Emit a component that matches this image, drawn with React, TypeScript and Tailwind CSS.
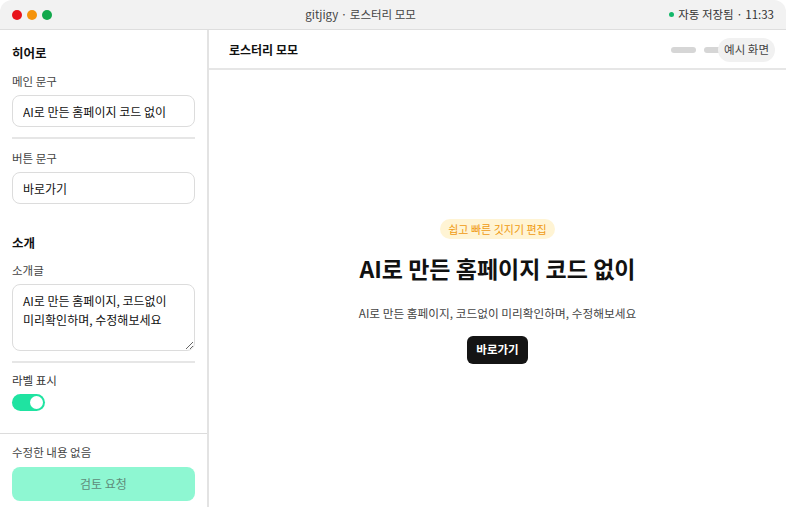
import {useState} from 'react';

const font = {fontFamily: '"Noto Sans CJK KR", "Noto Sans", sans-serif'};

function Field({label, value}: {label: string; value: string}) {
  return (
    <div className="flex flex-col">
      <div className="mb-[6px] text-[11.5px] leading-[16px] text-[#444]">{label}</div>
      <input
        readOnly
        value={value}
        className="h-[32px] w-full rounded-[8px] border border-[#dcdcdc] bg-white px-[10px] text-[12px] text-[#111] outline-none"
      />
    </div>
  );
}

function Toggle() {
  const [on, setOn] = useState(true);
  return (
    <button
      onClick={() => setOn(!on)}
      className={`flex h-[17px] w-[33px] items-center rounded-full px-[2px] ${on ? 'justify-end bg-[#1fe3a1]' : 'justify-start bg-[#d4d4d4]'}`}
    >
      <span className="block h-[13px] w-[13px] rounded-full bg-white" />
    </button>
  );
}

export default function App() {
  return (
    <div className="flex h-[507px] w-[786px] flex-col overflow-hidden rounded-t-[12px] bg-white" style={font}>
      {/* title bar */}
      <div className="relative flex h-[30px] shrink-0 items-center border-b border-[#dedede] bg-[#f2f2f2] px-[12px]">
        <div className="flex gap-[5px]">
          <span className="h-[10px] w-[10px] rounded-full bg-[#e8141c]" />
          <span className="h-[10px] w-[10px] rounded-full bg-[#f5930b]" />
          <span className="h-[10px] w-[10px] rounded-full bg-[#12a84c]" />
        </div>
        <div className="flex-1 text-center text-[11.5px] text-[#444]">gitjigy · 로스터리 모모</div>
        <div className="flex items-center gap-[4px] text-[11.5px] text-[#333]">
          <span className="h-[5px] w-[5px] rounded-full bg-[#14b86a]" />
          자동 저장됨 · 11:33
        </div>
      </div>

      <div className="flex min-h-0 flex-1">
        {/* sidebar */}
        <aside className="flex w-[209px] shrink-0 flex-col border-r-2 border-[#e3e3e3]">
          <div className="flex flex-1 flex-col px-[12px] pt-[15px]">
            <div className="mb-[12px] text-[12.5px] font-bold leading-[16px] text-[#111]">히어로</div>
            <Field label="메인 문구" value="AI로 만든 홈페이지 코드 없이" />
            <div className="mb-[11px] mt-[10px] h-[2px] bg-[#e6e6e6]" />
            <Field label="버튼 문구" value="바로가기" />

            <div className="mb-[11px] mt-[31px] text-[12.5px] font-bold leading-[16px] text-[#111]">소개</div>
            <div className="mb-[6px] text-[11.5px] leading-[16px] text-[#444]">소개글</div>
            <textarea
              readOnly
              value={'AI로 만든 홈페이지, 코드없이 미리확인하며, 수정해보세요'}
              className="h-[67px] w-full resize-y break-keep rounded-[8px] border border-[#dcdcdc] px-[10px] py-[6px] text-[12px] leading-[19px] text-[#111] outline-none"
            />
            <div className="mb-[9px] mt-[10px] h-[2px] bg-[#e6e6e6]" />
            <div className="mb-[6px] text-[11.5px] leading-[16px] text-[#333]">라벨 표시</div>
            <Toggle />
          </div>

          <div className="flex flex-col border-t border-[#dcdcdc] px-[12px] pb-[6px] pt-[10px]">
            <div className="mb-[7px] text-[11.5px] leading-[16px] text-[#444]">수정한 내용 없음</div>
            <button className="h-[34px] w-full rounded-[8px] bg-[#8ef7d2] text-[12px] text-[#5e8c7a]">검토 요청</button>
          </div>
        </aside>

        {/* preview */}
        <main className="flex min-w-0 flex-1 flex-col">
          <div className="flex h-[40px] shrink-0 items-center justify-between border-b-2 border-[#e6e6e6] pl-[20px] pr-[11px] pt-[2px]">
            <div className="text-[12px] font-bold text-[#111]">로스터리 모모</div>
            <div className="flex items-center">
              <span className="mr-[8px] h-[6px] w-[25px] rounded-full bg-[#d6d6d6]" />
              <span className="-mr-[6px] h-[6px] w-[20px] rounded-full bg-[#d6d6d6]" />
              <span className="relative rounded-full bg-[#f1f1f1] px-[6px] py-[3px] text-[11.5px] text-[#444]">예시 화면</span>
            </div>
          </div>

          <div className="flex flex-1 flex-col items-center justify-center pt-[6px]">
            <span className="rounded-full bg-[#fff4d4] px-[8px] py-[2px] text-[11px] text-[#ef9a12]">쉽고 빠른 깃지기 편집</span>
            <h1 className="mt-[13px] text-[23px] font-bold leading-[32px] text-[#111]">AI로 만든 홈페이지 코드 없이</h1>
            <p className="mt-[20px] text-[11.7px] text-[#444]">AI로 만든 홈페이지, 코드없이 미리확인하며, 수정해보세요</p>
            <button className="mt-[14px] h-[28px] rounded-[6px] bg-[#141414] px-[9px] text-[11.5px] font-bold text-white">바로가기</button>
          </div>
        </main>
      </div>
    </div>
  );
}
